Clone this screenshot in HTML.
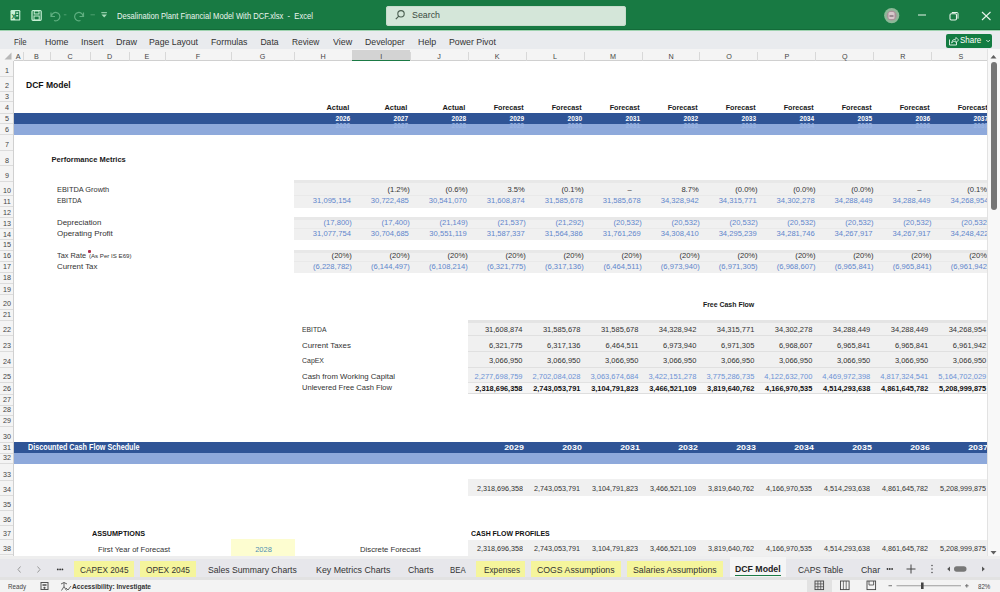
<!DOCTYPE html>
<html><head><meta charset="utf-8"><style>
html,body{margin:0;padding:0;width:1000px;height:592px;overflow:hidden;background:#fff;position:relative;font-family:"Liberation Sans",sans-serif}
body>div,body>span,body>svg{position:absolute}
div>span.t,body>span.t{position:absolute;white-space:pre}
</style></head><body>
<div style="left:0px;top:0px;width:1000px;height:30px;z-index:1;background:#187a43"></div>
<div style="left:0px;top:29px;width:1000px;height:1px;z-index:1;background:#136b39"></div>
<div style="left:386px;top:5.5px;width:239.5px;height:20px;z-index:1;background:#d4e6d9;border-radius:3px;box-shadow:inset 0 0 0 1px #c6dccc"></div>
<div style="left:0px;top:30px;width:1000px;height:19px;z-index:1;background:#e9ebee"></div>
<div style="left:0px;top:30px;width:1000px;height:1px;z-index:1;background:#9fd3b0"></div>
<div style="left:946px;top:33.6px;width:46.3px;height:14.7px;z-index:1;background:#137c42;border-radius:2px"></div>
<div style="left:0px;top:49px;width:987px;height:12px;z-index:1;background:#f4f4f4;border-bottom:1px solid #d0d0d0;box-sizing:border-box"></div>
<div style="left:22.5px;top:52px;width:1px;height:9px;z-index:2;background:#d8d8d8"></div>
<div style="left:49.5px;top:52px;width:1px;height:9px;z-index:2;background:#d8d8d8"></div>
<div style="left:89.5px;top:52px;width:1px;height:9px;z-index:2;background:#d8d8d8"></div>
<div style="left:128.5px;top:52px;width:1px;height:9px;z-index:2;background:#d8d8d8"></div>
<div style="left:164.5px;top:52px;width:1px;height:9px;z-index:2;background:#d8d8d8"></div>
<div style="left:230.5px;top:52px;width:1px;height:9px;z-index:2;background:#d8d8d8"></div>
<div style="left:293.7px;top:52px;width:1px;height:9px;z-index:2;background:#d8d8d8"></div>
<div style="left:351.67px;top:52px;width:1px;height:9px;z-index:2;background:#d8d8d8"></div>
<div style="left:409.64px;top:52px;width:1px;height:9px;z-index:2;background:#d8d8d8"></div>
<div style="left:467.61px;top:52px;width:1px;height:9px;z-index:2;background:#d8d8d8"></div>
<div style="left:525.58px;top:52px;width:1px;height:9px;z-index:2;background:#d8d8d8"></div>
<div style="left:583.55px;top:52px;width:1px;height:9px;z-index:2;background:#d8d8d8"></div>
<div style="left:641.52px;top:52px;width:1px;height:9px;z-index:2;background:#d8d8d8"></div>
<div style="left:699.49px;top:52px;width:1px;height:9px;z-index:2;background:#d8d8d8"></div>
<div style="left:757.46px;top:52px;width:1px;height:9px;z-index:2;background:#d8d8d8"></div>
<div style="left:815.43px;top:52px;width:1px;height:9px;z-index:2;background:#d8d8d8"></div>
<div style="left:873.4px;top:52px;width:1px;height:9px;z-index:2;background:#d8d8d8"></div>
<div style="left:931.37px;top:52px;width:1px;height:9px;z-index:2;background:#d8d8d8"></div>
<div style="left:989.34px;top:52px;width:1px;height:9px;z-index:2;background:#d8d8d8"></div>
<div style="left:352.17px;top:50px;width:57.97px;height:11px;z-index:2;background:#d3d3d3"></div>
<div style="left:352.17px;top:59.5px;width:57.97px;height:1.5px;z-index:3;background:#1b7a45"></div>
<div style="left:0px;top:49px;width:13.5px;height:12px;z-index:2;background:#f4f4f4"></div>
<div style="left:0px;top:61px;width:13.5px;height:496px;z-index:1;background:#f4f4f4;border-right:1px solid #d0d0d0;box-sizing:border-box"></div>
<div style="left:0px;top:75.5px;width:13px;height:1px;z-index:2;background:#dcdcdc"></div>
<div style="left:0px;top:90.5px;width:13px;height:1px;z-index:2;background:#dcdcdc"></div>
<div style="left:0px;top:101px;width:13px;height:1px;z-index:2;background:#dcdcdc"></div>
<div style="left:0px;top:112.5px;width:13px;height:1px;z-index:2;background:#dcdcdc"></div>
<div style="left:0px;top:123px;width:13px;height:1px;z-index:2;background:#dcdcdc"></div>
<div style="left:0px;top:134px;width:13px;height:1px;z-index:2;background:#dcdcdc"></div>
<div style="left:0px;top:149.5px;width:13px;height:1px;z-index:2;background:#dcdcdc"></div>
<div style="left:0px;top:165px;width:13px;height:1px;z-index:2;background:#dcdcdc"></div>
<div style="left:0px;top:180.5px;width:13px;height:1px;z-index:2;background:#dcdcdc"></div>
<div style="left:0px;top:195px;width:13px;height:1px;z-index:2;background:#dcdcdc"></div>
<div style="left:0px;top:206px;width:13px;height:1px;z-index:2;background:#dcdcdc"></div>
<div style="left:0px;top:217px;width:13px;height:1px;z-index:2;background:#dcdcdc"></div>
<div style="left:0px;top:228px;width:13px;height:1px;z-index:2;background:#dcdcdc"></div>
<div style="left:0px;top:239px;width:13px;height:1px;z-index:2;background:#dcdcdc"></div>
<div style="left:0px;top:249.5px;width:13px;height:1px;z-index:2;background:#dcdcdc"></div>
<div style="left:0px;top:260.5px;width:13px;height:1px;z-index:2;background:#dcdcdc"></div>
<div style="left:0px;top:271.5px;width:13px;height:1px;z-index:2;background:#dcdcdc"></div>
<div style="left:0px;top:282.5px;width:13px;height:1px;z-index:2;background:#dcdcdc"></div>
<div style="left:0px;top:294px;width:13px;height:1px;z-index:2;background:#dcdcdc"></div>
<div style="left:0px;top:309px;width:13px;height:1px;z-index:2;background:#dcdcdc"></div>
<div style="left:0px;top:320px;width:13px;height:1px;z-index:2;background:#dcdcdc"></div>
<div style="left:0px;top:335px;width:13px;height:1px;z-index:2;background:#dcdcdc"></div>
<div style="left:0px;top:351px;width:13px;height:1px;z-index:2;background:#dcdcdc"></div>
<div style="left:0px;top:366.5px;width:13px;height:1px;z-index:2;background:#dcdcdc"></div>
<div style="left:0px;top:382px;width:13px;height:1px;z-index:2;background:#dcdcdc"></div>
<div style="left:0px;top:393.5px;width:13px;height:1px;z-index:2;background:#dcdcdc"></div>
<div style="left:0px;top:404.5px;width:13px;height:1px;z-index:2;background:#dcdcdc"></div>
<div style="left:0px;top:415px;width:13px;height:1px;z-index:2;background:#dcdcdc"></div>
<div style="left:0px;top:426px;width:13px;height:1px;z-index:2;background:#dcdcdc"></div>
<div style="left:0px;top:441.5px;width:13px;height:1px;z-index:2;background:#dcdcdc"></div>
<div style="left:0px;top:452.5px;width:13px;height:1px;z-index:2;background:#dcdcdc"></div>
<div style="left:0px;top:463px;width:13px;height:1px;z-index:2;background:#dcdcdc"></div>
<div style="left:0px;top:480px;width:13px;height:1px;z-index:2;background:#dcdcdc"></div>
<div style="left:0px;top:495px;width:13px;height:1px;z-index:2;background:#dcdcdc"></div>
<div style="left:0px;top:509.5px;width:13px;height:1px;z-index:2;background:#dcdcdc"></div>
<div style="left:0px;top:524.5px;width:13px;height:1px;z-index:2;background:#dcdcdc"></div>
<div style="left:0px;top:539px;width:13px;height:1px;z-index:2;background:#dcdcdc"></div>
<div style="left:0px;top:554px;width:13px;height:1px;z-index:2;background:#dcdcdc"></div>
<div style="left:13.5px;top:61px;width:973.5px;height:496px;z-index:0;background:#fff"></div>
<div style="left:13.5px;top:113px;width:973.5px;height:10.5px;z-index:1;background:#2f5496"></div>
<div style="left:13.5px;top:123.5px;width:973.5px;height:11px;z-index:1;background:#8ea9db"></div>
<div style="left:13.5px;top:442px;width:973.5px;height:11px;z-index:1;background:#2f5496"></div>
<div style="left:13.5px;top:453px;width:973.5px;height:10.5px;z-index:1;background:#8ea9db"></div>
<div style="left:294.2px;top:180px;width:692.8px;height:28px;z-index:1;background:#f0f0f0"></div>
<div style="left:294.2px;top:180px;width:692.8px;height:3px;z-index:1;background:#e8e8e8"></div>
<div style="left:294.2px;top:195px;width:692.8px;height:1px;z-index:1;background:#e9e9e9"></div>
<div style="left:294.2px;top:217px;width:692.8px;height:23px;z-index:1;background:#f0f0f0"></div>
<div style="left:294.2px;top:217px;width:692.8px;height:3px;z-index:1;background:#e8e8e8"></div>
<div style="left:294.2px;top:228px;width:692.8px;height:1px;z-index:1;background:#e9e9e9"></div>
<div style="left:294.2px;top:250px;width:692.8px;height:22.5px;z-index:1;background:#f0f0f0"></div>
<div style="left:294.2px;top:250px;width:692.8px;height:3px;z-index:1;background:#e8e8e8"></div>
<div style="left:294.2px;top:260.5px;width:692.8px;height:1px;z-index:1;background:#e9e9e9"></div>
<div style="left:88px;top:250px;width:2.5px;height:2.5px;z-index:6;background:#b03050;border-radius:1px"></div>
<div style="left:468.11px;top:320px;width:518.89px;height:73px;z-index:1;background:#f0f0f0"></div>
<div style="left:468.11px;top:320px;width:518.89px;height:2.5px;z-index:1;background:#e4e4e4"></div>
<div style="left:468.11px;top:335px;width:518.89px;height:1px;z-index:1;background:#e0e0e0"></div>
<div style="left:468.11px;top:351px;width:518.89px;height:1px;z-index:1;background:#e0e0e0"></div>
<div style="left:468.11px;top:366.5px;width:518.89px;height:1px;z-index:1;background:#e0e0e0"></div>
<div style="left:468.11px;top:382px;width:518.89px;height:11px;z-index:1;background:#f6f6f6"></div>
<div style="left:468.11px;top:381.5px;width:518.89px;height:1px;z-index:1;background:#e2e2e2"></div>
<div style="left:468.11px;top:392.5px;width:518.89px;height:1px;z-index:1;background:#dedede"></div>
<div style="left:468.11px;top:479px;width:518.89px;height:16.5px;z-index:1;background:#f0f0f0"></div>
<div style="left:468.11px;top:539.5px;width:518.89px;height:17.5px;z-index:1;background:#f0f0f0"></div>
<div style="left:231.4px;top:539px;width:63.9px;height:18px;z-index:1;background:#fdfdd0"></div>
<div style="left:987px;top:49px;width:13px;height:507px;z-index:8;background:#f8f8f8;border-left:1px solid #e2e2e2;box-sizing:border-box"></div>
<div style="left:991px;top:62px;width:6px;height:148px;z-index:9;background:#767676;border-radius:3px"></div>
<div style="left:0px;top:556px;width:1000px;height:3px;z-index:8;background:#eeeeee"></div>
<div style="left:0px;top:559px;width:1000px;height:18px;z-index:8;background:#e7e7eb"></div>
<div style="left:0px;top:577px;width:1000px;height:2.5px;z-index:8;background:#e2e2e2"></div>
<div style="left:0px;top:579.5px;width:1000px;height:12.5px;z-index:8;background:#f3f3f3"></div>
<div style="left:74px;top:561px;width:59.6px;height:15.5px;z-index:9;background:#f5f59c"></div>
<div style="left:140px;top:561px;width:56px;height:15.5px;z-index:9;background:#f5f59c"></div>
<div style="left:475.7px;top:561px;width:49.3px;height:15.5px;z-index:9;background:#f5f59c"></div>
<div style="left:531px;top:561px;width:89.8px;height:15.5px;z-index:9;background:#f5f59c"></div>
<div style="left:627.3px;top:561px;width:96.2px;height:15.5px;z-index:9;background:#f5f59c"></div>
<div style="left:729.8px;top:557px;width:56px;height:20px;z-index:9;background:#f5f5f5"></div>
<div style="left:735.4px;top:574.5px;width:45.6px;height:1.1px;z-index:10;background:#1b7a45"></div>
<span class="t" style="left:117.3px;top:11.88px;font-size:9px;line-height:9px;color:#eaf5ee;z-index:5;transform:scaleX(0.846);transform-origin:left 0;">Desalination Plant Financial Model With DCF.xlsx  -  Excel</span>
<span class="t" style="left:412px;top:11.18px;font-size:9px;line-height:9px;color:#3a4a40;z-index:5;transform:scaleX(0.982);transform-origin:left 0;">Search</span>
<span class="t" style="left:13.75px;top:37.52px;font-size:8.6px;line-height:8.6px;color:#333;z-index:5;transform:scaleX(0.903);transform-origin:left 0;">File</span>
<span class="t" style="left:44.5px;top:37.52px;font-size:8.6px;line-height:8.6px;color:#333;z-index:5;transform:scaleX(1.025);transform-origin:left 0;">Home</span>
<span class="t" style="left:80.5px;top:37.52px;font-size:8.6px;line-height:8.6px;color:#333;z-index:5;transform:scaleX(1.047);transform-origin:left 0;">Insert</span>
<span class="t" style="left:116px;top:37.52px;font-size:8.6px;line-height:8.6px;color:#333;z-index:5;transform:scaleX(1.047);transform-origin:left 0;">Draw</span>
<span class="t" style="left:149px;top:37.52px;font-size:8.6px;line-height:8.6px;color:#333;z-index:5;transform:scaleX(1.015);transform-origin:left 0;">Page Layout</span>
<span class="t" style="left:211px;top:37.52px;font-size:8.6px;line-height:8.6px;color:#333;z-index:5;transform:scaleX(1.019);transform-origin:left 0;">Formulas</span>
<span class="t" style="left:260.4px;top:37.52px;font-size:8.6px;line-height:8.6px;color:#333;z-index:5;">Data</span>
<span class="t" style="left:292.3px;top:37.52px;font-size:8.6px;line-height:8.6px;color:#333;z-index:5;transform:scaleX(0.969);transform-origin:left 0;">Review</span>
<span class="t" style="left:332.6px;top:37.52px;font-size:8.6px;line-height:8.6px;color:#333;z-index:5;transform:scaleX(1.039);transform-origin:left 0;">View</span>
<span class="t" style="left:364.8px;top:37.52px;font-size:8.6px;line-height:8.6px;color:#333;z-index:5;transform:scaleX(1.013);transform-origin:left 0;">Developer</span>
<span class="t" style="left:417.5px;top:37.52px;font-size:8.6px;line-height:8.6px;color:#333;z-index:5;transform:scaleX(1.030);transform-origin:left 0;">Help</span>
<span class="t" style="left:448.7px;top:37.52px;font-size:8.6px;line-height:8.6px;color:#333;z-index:5;transform:scaleX(1.021);transform-origin:left 0;">Power Pivot</span>
<span class="t" style="left:959.7px;top:37.26px;font-size:8.2px;line-height:8.2px;color:#fff;z-index:5;transform:scaleX(0.975);transform-origin:left 0;">Share</span>
<span class="t" style="left:15.85px;top:52.51px;font-size:7.2px;line-height:7.2px;color:#444;z-index:5;">A</span>
<span class="t" style="left:34.1px;top:52.51px;font-size:7.2px;line-height:7.2px;color:#444;z-index:5;">B</span>
<span class="t" style="left:67.4px;top:52.51px;font-size:7.2px;line-height:7.2px;color:#444;z-index:5;">C</span>
<span class="t" style="left:106.9px;top:52.51px;font-size:7.2px;line-height:7.2px;color:#444;z-index:5;">D</span>
<span class="t" style="left:144.6px;top:52.51px;font-size:7.2px;line-height:7.2px;color:#444;z-index:5;">E</span>
<span class="t" style="left:195.8px;top:52.51px;font-size:7.2px;line-height:7.2px;color:#444;z-index:5;">F</span>
<span class="t" style="left:259.8px;top:52.51px;font-size:7.2px;line-height:7.2px;color:#444;z-index:5;">G</span>
<span class="t" style="left:320.59px;top:52.51px;font-size:7.2px;line-height:7.2px;color:#444;z-index:5;">H</span>
<span class="t" style="left:380.16px;top:52.51px;font-size:7.2px;line-height:7.2px;color:#444;z-index:5;">I</span>
<span class="t" style="left:437.33px;top:52.51px;font-size:7.2px;line-height:7.2px;color:#444;z-index:5;">J</span>
<span class="t" style="left:494.7px;top:52.51px;font-size:7.2px;line-height:7.2px;color:#444;z-index:5;">K</span>
<span class="t" style="left:553.07px;top:52.51px;font-size:7.2px;line-height:7.2px;color:#444;z-index:5;">L</span>
<span class="t" style="left:610.04px;top:52.51px;font-size:7.2px;line-height:7.2px;color:#444;z-index:5;">M</span>
<span class="t" style="left:668.41px;top:52.51px;font-size:7.2px;line-height:7.2px;color:#444;z-index:5;">N</span>
<span class="t" style="left:726.18px;top:52.51px;font-size:7.2px;line-height:7.2px;color:#444;z-index:5;">O</span>
<span class="t" style="left:784.55px;top:52.51px;font-size:7.2px;line-height:7.2px;color:#444;z-index:5;">P</span>
<span class="t" style="left:842.12px;top:52.51px;font-size:7.2px;line-height:7.2px;color:#444;z-index:5;">Q</span>
<span class="t" style="left:900.29px;top:52.51px;font-size:7.2px;line-height:7.2px;color:#444;z-index:5;">R</span>
<span class="t" style="left:958.46px;top:52.51px;font-size:7.2px;line-height:7.2px;color:#444;z-index:5;">S</span>
<span class="t" style="left:5px;top:67.31px;font-size:7.2px;line-height:7.2px;color:#444;z-index:5;">1</span>
<span class="t" style="left:5px;top:82.31px;font-size:7.2px;line-height:7.2px;color:#444;z-index:5;">2</span>
<span class="t" style="left:5px;top:92.81px;font-size:7.2px;line-height:7.2px;color:#444;z-index:5;">3</span>
<span class="t" style="left:5px;top:104.31px;font-size:7.2px;line-height:7.2px;color:#444;z-index:5;">4</span>
<span class="t" style="left:5px;top:114.81px;font-size:7.2px;line-height:7.2px;color:#444;z-index:5;">5</span>
<span class="t" style="left:5px;top:125.81px;font-size:7.2px;line-height:7.2px;color:#444;z-index:5;">6</span>
<span class="t" style="left:5px;top:141.31px;font-size:7.2px;line-height:7.2px;color:#444;z-index:5;">7</span>
<span class="t" style="left:5px;top:156.81px;font-size:7.2px;line-height:7.2px;color:#444;z-index:5;">8</span>
<span class="t" style="left:5px;top:172.31px;font-size:7.2px;line-height:7.2px;color:#444;z-index:5;">9</span>
<span class="t" style="left:3px;top:186.81px;font-size:7.2px;line-height:7.2px;color:#444;z-index:5;">10</span>
<span class="t" style="left:3.27px;top:197.81px;font-size:7.2px;line-height:7.2px;color:#444;z-index:5;">11</span>
<span class="t" style="left:3px;top:208.81px;font-size:7.2px;line-height:7.2px;color:#444;z-index:5;">12</span>
<span class="t" style="left:3px;top:219.81px;font-size:7.2px;line-height:7.2px;color:#444;z-index:5;">13</span>
<span class="t" style="left:3px;top:230.81px;font-size:7.2px;line-height:7.2px;color:#444;z-index:5;">14</span>
<span class="t" style="left:3px;top:241.31px;font-size:7.2px;line-height:7.2px;color:#444;z-index:5;">15</span>
<span class="t" style="left:3px;top:252.31px;font-size:7.2px;line-height:7.2px;color:#444;z-index:5;">16</span>
<span class="t" style="left:3px;top:263.31px;font-size:7.2px;line-height:7.2px;color:#444;z-index:5;">17</span>
<span class="t" style="left:3px;top:274.31px;font-size:7.2px;line-height:7.2px;color:#444;z-index:5;">18</span>
<span class="t" style="left:3px;top:285.81px;font-size:7.2px;line-height:7.2px;color:#444;z-index:5;">19</span>
<span class="t" style="left:3px;top:300.11px;font-size:7.2px;line-height:7.2px;color:#444;z-index:5;">20</span>
<span class="t" style="left:3px;top:311.11px;font-size:7.2px;line-height:7.2px;color:#444;z-index:5;">21</span>
<span class="t" style="left:3px;top:326.11px;font-size:7.2px;line-height:7.2px;color:#444;z-index:5;">22</span>
<span class="t" style="left:3px;top:342.11px;font-size:7.2px;line-height:7.2px;color:#444;z-index:5;">23</span>
<span class="t" style="left:3px;top:357.61px;font-size:7.2px;line-height:7.2px;color:#444;z-index:5;">24</span>
<span class="t" style="left:3px;top:373.11px;font-size:7.2px;line-height:7.2px;color:#444;z-index:5;">25</span>
<span class="t" style="left:3px;top:384.61px;font-size:7.2px;line-height:7.2px;color:#444;z-index:5;">26</span>
<span class="t" style="left:3px;top:395.61px;font-size:7.2px;line-height:7.2px;color:#444;z-index:5;">27</span>
<span class="t" style="left:3px;top:406.11px;font-size:7.2px;line-height:7.2px;color:#444;z-index:5;">28</span>
<span class="t" style="left:3px;top:417.11px;font-size:7.2px;line-height:7.2px;color:#444;z-index:5;">29</span>
<span class="t" style="left:3px;top:432.61px;font-size:7.2px;line-height:7.2px;color:#444;z-index:5;">30</span>
<span class="t" style="left:3px;top:443.61px;font-size:7.2px;line-height:7.2px;color:#444;z-index:5;">31</span>
<span class="t" style="left:3px;top:454.11px;font-size:7.2px;line-height:7.2px;color:#444;z-index:5;">32</span>
<span class="t" style="left:3px;top:471.11px;font-size:7.2px;line-height:7.2px;color:#444;z-index:5;">33</span>
<span class="t" style="left:3px;top:486.11px;font-size:7.2px;line-height:7.2px;color:#444;z-index:5;">34</span>
<span class="t" style="left:3px;top:500.61px;font-size:7.2px;line-height:7.2px;color:#444;z-index:5;">35</span>
<span class="t" style="left:3px;top:515.61px;font-size:7.2px;line-height:7.2px;color:#444;z-index:5;">36</span>
<span class="t" style="left:3px;top:530.11px;font-size:7.2px;line-height:7.2px;color:#444;z-index:5;">37</span>
<span class="t" style="left:3px;top:545.11px;font-size:7.2px;line-height:7.2px;color:#444;z-index:5;">38</span>
<span class="t" style="left:26.4px;top:79.84px;font-size:9.4px;line-height:9.4px;color:#111;z-index:5;font-weight:700;transform:scaleX(0.911);transform-origin:left 0;">DCF Model</span>
<div style="left:0;top:0;width:988px;height:592px;overflow:hidden;z-index:5;pointer-events:none"><span class="t" style="left:326.36px;top:104.37px;font-size:7.6px;line-height:7.6px;color:#1a1a1a;z-index:5;font-weight:700;transform:scaleX(0.978);transform-origin:right 0;">Actual</span></div>
<div style="left:0;top:0;width:988px;height:592px;overflow:hidden;z-index:5;pointer-events:none"><span class="t" style="left:336.36px;top:116.07px;font-size:6.3px;line-height:6.3px;color:#fff;z-index:5;font-weight:700;transform:scaleX(1.035);transform-origin:right 0;">2026</span></div>
<div style="left:0;top:0;width:988px;height:592px;overflow:hidden;z-index:5;pointer-events:none"><span class="t" style="left:336.36px;top:122.67px;font-size:6.3px;line-height:6.3px;color:#9ab4e2;z-index:5;font-weight:700;transform:scaleX(1.035);transform-origin:right 0;">2026</span></div>
<div style="left:0;top:0;width:988px;height:592px;overflow:hidden;z-index:5;pointer-events:none"><span class="t" style="left:384.33px;top:104.37px;font-size:7.6px;line-height:7.6px;color:#1a1a1a;z-index:5;font-weight:700;transform:scaleX(0.978);transform-origin:right 0;">Actual</span></div>
<div style="left:0;top:0;width:988px;height:592px;overflow:hidden;z-index:5;pointer-events:none"><span class="t" style="left:394.33px;top:116.07px;font-size:6.3px;line-height:6.3px;color:#fff;z-index:5;font-weight:700;transform:scaleX(1.035);transform-origin:right 0;">2027</span></div>
<div style="left:0;top:0;width:988px;height:592px;overflow:hidden;z-index:5;pointer-events:none"><span class="t" style="left:394.33px;top:122.67px;font-size:6.3px;line-height:6.3px;color:#9ab4e2;z-index:5;font-weight:700;transform:scaleX(1.035);transform-origin:right 0;">2027</span></div>
<div style="left:0;top:0;width:988px;height:592px;overflow:hidden;z-index:5;pointer-events:none"><span class="t" style="left:442.3px;top:104.37px;font-size:7.6px;line-height:7.6px;color:#1a1a1a;z-index:5;font-weight:700;transform:scaleX(0.978);transform-origin:right 0;">Actual</span></div>
<div style="left:0;top:0;width:988px;height:592px;overflow:hidden;z-index:5;pointer-events:none"><span class="t" style="left:452.3px;top:116.07px;font-size:6.3px;line-height:6.3px;color:#fff;z-index:5;font-weight:700;transform:scaleX(1.035);transform-origin:right 0;">2028</span></div>
<div style="left:0;top:0;width:988px;height:592px;overflow:hidden;z-index:5;pointer-events:none"><span class="t" style="left:452.3px;top:122.67px;font-size:6.3px;line-height:6.3px;color:#9ab4e2;z-index:5;font-weight:700;transform:scaleX(1.035);transform-origin:right 0;">2028</span></div>
<div style="left:0;top:0;width:988px;height:592px;overflow:hidden;z-index:5;pointer-events:none"><span class="t" style="left:491.83px;top:104.37px;font-size:7.6px;line-height:7.6px;color:#1a1a1a;z-index:5;font-weight:700;transform:scaleX(0.948);transform-origin:right 0;">Forecast</span></div>
<div style="left:0;top:0;width:988px;height:592px;overflow:hidden;z-index:5;pointer-events:none"><span class="t" style="left:510.27px;top:116.07px;font-size:6.3px;line-height:6.3px;color:#fff;z-index:5;font-weight:700;transform:scaleX(1.035);transform-origin:right 0;">2029</span></div>
<div style="left:0;top:0;width:988px;height:592px;overflow:hidden;z-index:5;pointer-events:none"><span class="t" style="left:510.27px;top:122.67px;font-size:6.3px;line-height:6.3px;color:#9ab4e2;z-index:5;font-weight:700;transform:scaleX(1.035);transform-origin:right 0;">2029</span></div>
<div style="left:0;top:0;width:988px;height:592px;overflow:hidden;z-index:5;pointer-events:none"><span class="t" style="left:549.8px;top:104.37px;font-size:7.6px;line-height:7.6px;color:#1a1a1a;z-index:5;font-weight:700;transform:scaleX(0.948);transform-origin:right 0;">Forecast</span></div>
<div style="left:0;top:0;width:988px;height:592px;overflow:hidden;z-index:5;pointer-events:none"><span class="t" style="left:568.24px;top:116.07px;font-size:6.3px;line-height:6.3px;color:#fff;z-index:5;font-weight:700;transform:scaleX(1.035);transform-origin:right 0;">2030</span></div>
<div style="left:0;top:0;width:988px;height:592px;overflow:hidden;z-index:5;pointer-events:none"><span class="t" style="left:568.24px;top:122.67px;font-size:6.3px;line-height:6.3px;color:#9ab4e2;z-index:5;font-weight:700;transform:scaleX(1.035);transform-origin:right 0;">2030</span></div>
<div style="left:0;top:0;width:988px;height:592px;overflow:hidden;z-index:5;pointer-events:none"><span class="t" style="left:607.77px;top:104.37px;font-size:7.6px;line-height:7.6px;color:#1a1a1a;z-index:5;font-weight:700;transform:scaleX(0.948);transform-origin:right 0;">Forecast</span></div>
<div style="left:0;top:0;width:988px;height:592px;overflow:hidden;z-index:5;pointer-events:none"><span class="t" style="left:626.21px;top:116.07px;font-size:6.3px;line-height:6.3px;color:#fff;z-index:5;font-weight:700;transform:scaleX(1.035);transform-origin:right 0;">2031</span></div>
<div style="left:0;top:0;width:988px;height:592px;overflow:hidden;z-index:5;pointer-events:none"><span class="t" style="left:626.21px;top:122.67px;font-size:6.3px;line-height:6.3px;color:#9ab4e2;z-index:5;font-weight:700;transform:scaleX(1.035);transform-origin:right 0;">2031</span></div>
<div style="left:0;top:0;width:988px;height:592px;overflow:hidden;z-index:5;pointer-events:none"><span class="t" style="left:665.74px;top:104.37px;font-size:7.6px;line-height:7.6px;color:#1a1a1a;z-index:5;font-weight:700;transform:scaleX(0.948);transform-origin:right 0;">Forecast</span></div>
<div style="left:0;top:0;width:988px;height:592px;overflow:hidden;z-index:5;pointer-events:none"><span class="t" style="left:684.18px;top:116.07px;font-size:6.3px;line-height:6.3px;color:#fff;z-index:5;font-weight:700;transform:scaleX(1.035);transform-origin:right 0;">2032</span></div>
<div style="left:0;top:0;width:988px;height:592px;overflow:hidden;z-index:5;pointer-events:none"><span class="t" style="left:684.18px;top:122.67px;font-size:6.3px;line-height:6.3px;color:#9ab4e2;z-index:5;font-weight:700;transform:scaleX(1.035);transform-origin:right 0;">2032</span></div>
<div style="left:0;top:0;width:988px;height:592px;overflow:hidden;z-index:5;pointer-events:none"><span class="t" style="left:723.71px;top:104.37px;font-size:7.6px;line-height:7.6px;color:#1a1a1a;z-index:5;font-weight:700;transform:scaleX(0.948);transform-origin:right 0;">Forecast</span></div>
<div style="left:0;top:0;width:988px;height:592px;overflow:hidden;z-index:5;pointer-events:none"><span class="t" style="left:742.15px;top:116.07px;font-size:6.3px;line-height:6.3px;color:#fff;z-index:5;font-weight:700;transform:scaleX(1.035);transform-origin:right 0;">2033</span></div>
<div style="left:0;top:0;width:988px;height:592px;overflow:hidden;z-index:5;pointer-events:none"><span class="t" style="left:742.15px;top:122.67px;font-size:6.3px;line-height:6.3px;color:#9ab4e2;z-index:5;font-weight:700;transform:scaleX(1.035);transform-origin:right 0;">2033</span></div>
<div style="left:0;top:0;width:988px;height:592px;overflow:hidden;z-index:5;pointer-events:none"><span class="t" style="left:781.68px;top:104.37px;font-size:7.6px;line-height:7.6px;color:#1a1a1a;z-index:5;font-weight:700;transform:scaleX(0.948);transform-origin:right 0;">Forecast</span></div>
<div style="left:0;top:0;width:988px;height:592px;overflow:hidden;z-index:5;pointer-events:none"><span class="t" style="left:800.12px;top:116.07px;font-size:6.3px;line-height:6.3px;color:#fff;z-index:5;font-weight:700;transform:scaleX(1.035);transform-origin:right 0;">2034</span></div>
<div style="left:0;top:0;width:988px;height:592px;overflow:hidden;z-index:5;pointer-events:none"><span class="t" style="left:800.12px;top:122.67px;font-size:6.3px;line-height:6.3px;color:#9ab4e2;z-index:5;font-weight:700;transform:scaleX(1.035);transform-origin:right 0;">2034</span></div>
<div style="left:0;top:0;width:988px;height:592px;overflow:hidden;z-index:5;pointer-events:none"><span class="t" style="left:839.65px;top:104.37px;font-size:7.6px;line-height:7.6px;color:#1a1a1a;z-index:5;font-weight:700;transform:scaleX(0.948);transform-origin:right 0;">Forecast</span></div>
<div style="left:0;top:0;width:988px;height:592px;overflow:hidden;z-index:5;pointer-events:none"><span class="t" style="left:858.09px;top:116.07px;font-size:6.3px;line-height:6.3px;color:#fff;z-index:5;font-weight:700;transform:scaleX(1.035);transform-origin:right 0;">2035</span></div>
<div style="left:0;top:0;width:988px;height:592px;overflow:hidden;z-index:5;pointer-events:none"><span class="t" style="left:858.09px;top:122.67px;font-size:6.3px;line-height:6.3px;color:#9ab4e2;z-index:5;font-weight:700;transform:scaleX(1.035);transform-origin:right 0;">2035</span></div>
<div style="left:0;top:0;width:988px;height:592px;overflow:hidden;z-index:5;pointer-events:none"><span class="t" style="left:897.62px;top:104.37px;font-size:7.6px;line-height:7.6px;color:#1a1a1a;z-index:5;font-weight:700;transform:scaleX(0.948);transform-origin:right 0;">Forecast</span></div>
<div style="left:0;top:0;width:988px;height:592px;overflow:hidden;z-index:5;pointer-events:none"><span class="t" style="left:916.06px;top:116.07px;font-size:6.3px;line-height:6.3px;color:#fff;z-index:5;font-weight:700;transform:scaleX(1.035);transform-origin:right 0;">2036</span></div>
<div style="left:0;top:0;width:988px;height:592px;overflow:hidden;z-index:5;pointer-events:none"><span class="t" style="left:916.06px;top:122.67px;font-size:6.3px;line-height:6.3px;color:#9ab4e2;z-index:5;font-weight:700;transform:scaleX(1.035);transform-origin:right 0;">2036</span></div>
<div style="left:0;top:0;width:988px;height:592px;overflow:hidden;z-index:5;pointer-events:none"><span class="t" style="left:955.59px;top:104.37px;font-size:7.6px;line-height:7.6px;color:#1a1a1a;z-index:5;font-weight:700;transform:scaleX(0.948);transform-origin:right 0;">Forecast</span></div>
<div style="left:0;top:0;width:988px;height:592px;overflow:hidden;z-index:5;pointer-events:none"><span class="t" style="left:974.03px;top:116.07px;font-size:6.3px;line-height:6.3px;color:#fff;z-index:5;font-weight:700;transform:scaleX(1.035);transform-origin:right 0;">2037</span></div>
<div style="left:0;top:0;width:988px;height:592px;overflow:hidden;z-index:5;pointer-events:none"><span class="t" style="left:974.03px;top:122.67px;font-size:6.3px;line-height:6.3px;color:#9ab4e2;z-index:5;font-weight:700;transform:scaleX(1.035);transform-origin:right 0;">2037</span></div>
<span class="t" style="left:51.6px;top:156.45px;font-size:7.5px;line-height:7.5px;color:#1a1a1a;z-index:5;font-weight:700;">Performance Metrics</span>
<span class="t" style="left:57px;top:186.25px;font-size:7.5px;line-height:7.5px;color:#333333;z-index:5;transform:scaleX(0.986);transform-origin:left 0;">EBITDA Growth</span>
<span class="t" style="left:57px;top:197.05px;font-size:7.5px;line-height:7.5px;color:#333333;z-index:5;transform:scaleX(0.908);transform-origin:left 0;">EBITDA</span>
<span class="t" style="left:57px;top:219.25px;font-size:7.5px;line-height:7.5px;color:#333333;z-index:5;transform:scaleX(1.054);transform-origin:left 0;">Depreciation</span>
<span class="t" style="left:57px;top:230.05px;font-size:7.5px;line-height:7.5px;color:#333333;z-index:5;transform:scaleX(1.062);transform-origin:left 0;">Operating Profit</span>
<span class="t" style="left:57px;top:262.65px;font-size:7.5px;line-height:7.5px;color:#333333;z-index:5;transform:scaleX(1.045);transform-origin:left 0;">Current Tax</span>
<span class="t" style="left:57px;top:252.15px;font-size:7.5px;line-height:7.5px;color:#333333;z-index:5;transform:scaleX(0.980);transform-origin:left 0;">Tax Rate</span>
<span class="t" style="left:88.5px;top:253.59px;font-size:5.8px;line-height:5.8px;color:#333333;z-index:5;transform:scaleX(1.055);transform-origin:left 0;">(As Per IS E69)</span>
<div style="left:0;top:0;width:988px;height:592px;overflow:hidden;z-index:5;pointer-events:none"><span class="t" style="left:351.87px;top:186.17px;font-size:7.6px;line-height:7.6px;color:#333333;z-index:5;"></span></div>
<div style="left:0;top:0;width:988px;height:592px;overflow:hidden;z-index:5;pointer-events:none"><span class="t" style="left:312.86px;top:196.97px;font-size:7.6px;line-height:7.6px;color:#5f86cc;z-index:5;">31,095,154</span></div>
<div style="left:0;top:0;width:988px;height:592px;overflow:hidden;z-index:5;pointer-events:none"><span class="t" style="left:323.59px;top:219.17px;font-size:7.6px;line-height:7.6px;color:#5f86cc;z-index:5;">(17,800)</span></div>
<div style="left:0;top:0;width:988px;height:592px;overflow:hidden;z-index:5;pointer-events:none"><span class="t" style="left:312.86px;top:229.97px;font-size:7.6px;line-height:7.6px;color:#5f86cc;z-index:5;">31,077,754</span></div>
<div style="left:0;top:0;width:988px;height:592px;overflow:hidden;z-index:5;pointer-events:none"><span class="t" style="left:331.61px;top:252.07px;font-size:7.6px;line-height:7.6px;color:#333333;z-index:5;">(20%)</span></div>
<div style="left:0;top:0;width:988px;height:592px;overflow:hidden;z-index:5;pointer-events:none"><span class="t" style="left:313.03px;top:262.57px;font-size:7.6px;line-height:7.6px;color:#5f86cc;z-index:5;">(6,228,782)</span></div>
<div style="left:0;top:0;width:988px;height:592px;overflow:hidden;z-index:5;pointer-events:none"><span class="t" style="left:387.47px;top:186.17px;font-size:7.6px;line-height:7.6px;color:#333333;z-index:5;">(1.2%)</span></div>
<div style="left:0;top:0;width:988px;height:592px;overflow:hidden;z-index:5;pointer-events:none"><span class="t" style="left:370.83px;top:196.97px;font-size:7.6px;line-height:7.6px;color:#5f86cc;z-index:5;">30,722,485</span></div>
<div style="left:0;top:0;width:988px;height:592px;overflow:hidden;z-index:5;pointer-events:none"><span class="t" style="left:381.56px;top:219.17px;font-size:7.6px;line-height:7.6px;color:#5f86cc;z-index:5;">(17,400)</span></div>
<div style="left:0;top:0;width:988px;height:592px;overflow:hidden;z-index:5;pointer-events:none"><span class="t" style="left:370.83px;top:229.97px;font-size:7.6px;line-height:7.6px;color:#5f86cc;z-index:5;">30,704,685</span></div>
<div style="left:0;top:0;width:988px;height:592px;overflow:hidden;z-index:5;pointer-events:none"><span class="t" style="left:389.58px;top:252.07px;font-size:7.6px;line-height:7.6px;color:#333333;z-index:5;">(20%)</span></div>
<div style="left:0;top:0;width:988px;height:592px;overflow:hidden;z-index:5;pointer-events:none"><span class="t" style="left:371px;top:262.57px;font-size:7.6px;line-height:7.6px;color:#5f86cc;z-index:5;">(6,144,497)</span></div>
<div style="left:0;top:0;width:988px;height:592px;overflow:hidden;z-index:5;pointer-events:none"><span class="t" style="left:445.44px;top:186.17px;font-size:7.6px;line-height:7.6px;color:#333333;z-index:5;">(0.6%)</span></div>
<div style="left:0;top:0;width:988px;height:592px;overflow:hidden;z-index:5;pointer-events:none"><span class="t" style="left:428.8px;top:196.97px;font-size:7.6px;line-height:7.6px;color:#5f86cc;z-index:5;">30,541,070</span></div>
<div style="left:0;top:0;width:988px;height:592px;overflow:hidden;z-index:5;pointer-events:none"><span class="t" style="left:439.53px;top:219.17px;font-size:7.6px;line-height:7.6px;color:#5f86cc;z-index:5;">(21,149)</span></div>
<div style="left:0;top:0;width:988px;height:592px;overflow:hidden;z-index:5;pointer-events:none"><span class="t" style="left:429.37px;top:229.97px;font-size:7.6px;line-height:7.6px;color:#5f86cc;z-index:5;">30,551,119</span></div>
<div style="left:0;top:0;width:988px;height:592px;overflow:hidden;z-index:5;pointer-events:none"><span class="t" style="left:447.55px;top:252.07px;font-size:7.6px;line-height:7.6px;color:#333333;z-index:5;">(20%)</span></div>
<div style="left:0;top:0;width:988px;height:592px;overflow:hidden;z-index:5;pointer-events:none"><span class="t" style="left:428.97px;top:262.57px;font-size:7.6px;line-height:7.6px;color:#5f86cc;z-index:5;">(6,108,214)</span></div>
<div style="left:0;top:0;width:988px;height:592px;overflow:hidden;z-index:5;pointer-events:none"><span class="t" style="left:507.47px;top:186.17px;font-size:7.6px;line-height:7.6px;color:#333333;z-index:5;">3.5%</span></div>
<div style="left:0;top:0;width:988px;height:592px;overflow:hidden;z-index:5;pointer-events:none"><span class="t" style="left:486.77px;top:196.97px;font-size:7.6px;line-height:7.6px;color:#5f86cc;z-index:5;">31,608,874</span></div>
<div style="left:0;top:0;width:988px;height:592px;overflow:hidden;z-index:5;pointer-events:none"><span class="t" style="left:497.5px;top:219.17px;font-size:7.6px;line-height:7.6px;color:#5f86cc;z-index:5;">(21,537)</span></div>
<div style="left:0;top:0;width:988px;height:592px;overflow:hidden;z-index:5;pointer-events:none"><span class="t" style="left:486.77px;top:229.97px;font-size:7.6px;line-height:7.6px;color:#5f86cc;z-index:5;">31,587,337</span></div>
<div style="left:0;top:0;width:988px;height:592px;overflow:hidden;z-index:5;pointer-events:none"><span class="t" style="left:505.52px;top:252.07px;font-size:7.6px;line-height:7.6px;color:#333333;z-index:5;">(20%)</span></div>
<div style="left:0;top:0;width:988px;height:592px;overflow:hidden;z-index:5;pointer-events:none"><span class="t" style="left:486.94px;top:262.57px;font-size:7.6px;line-height:7.6px;color:#5f86cc;z-index:5;">(6,321,775)</span></div>
<div style="left:0;top:0;width:988px;height:592px;overflow:hidden;z-index:5;pointer-events:none"><span class="t" style="left:561.38px;top:186.17px;font-size:7.6px;line-height:7.6px;color:#333333;z-index:5;">(0.1%)</span></div>
<div style="left:0;top:0;width:988px;height:592px;overflow:hidden;z-index:5;pointer-events:none"><span class="t" style="left:544.74px;top:196.97px;font-size:7.6px;line-height:7.6px;color:#5f86cc;z-index:5;">31,585,678</span></div>
<div style="left:0;top:0;width:988px;height:592px;overflow:hidden;z-index:5;pointer-events:none"><span class="t" style="left:555.47px;top:219.17px;font-size:7.6px;line-height:7.6px;color:#5f86cc;z-index:5;">(21,292)</span></div>
<div style="left:0;top:0;width:988px;height:592px;overflow:hidden;z-index:5;pointer-events:none"><span class="t" style="left:544.74px;top:229.97px;font-size:7.6px;line-height:7.6px;color:#5f86cc;z-index:5;">31,564,386</span></div>
<div style="left:0;top:0;width:988px;height:592px;overflow:hidden;z-index:5;pointer-events:none"><span class="t" style="left:563.49px;top:252.07px;font-size:7.6px;line-height:7.6px;color:#333333;z-index:5;">(20%)</span></div>
<div style="left:0;top:0;width:988px;height:592px;overflow:hidden;z-index:5;pointer-events:none"><span class="t" style="left:544.91px;top:262.57px;font-size:7.6px;line-height:7.6px;color:#5f86cc;z-index:5;">(6,317,136)</span></div>
<div style="left:0;top:0;width:988px;height:592px;overflow:hidden;z-index:5;pointer-events:none"><span class="t" style="left:627.5px;top:186.17px;font-size:7.6px;line-height:7.6px;color:#333333;z-index:5;">–</span></div>
<div style="left:0;top:0;width:988px;height:592px;overflow:hidden;z-index:5;pointer-events:none"><span class="t" style="left:602.71px;top:196.97px;font-size:7.6px;line-height:7.6px;color:#5f86cc;z-index:5;">31,585,678</span></div>
<div style="left:0;top:0;width:988px;height:592px;overflow:hidden;z-index:5;pointer-events:none"><span class="t" style="left:613.44px;top:219.17px;font-size:7.6px;line-height:7.6px;color:#5f86cc;z-index:5;">(20,532)</span></div>
<div style="left:0;top:0;width:988px;height:592px;overflow:hidden;z-index:5;pointer-events:none"><span class="t" style="left:602.71px;top:229.97px;font-size:7.6px;line-height:7.6px;color:#5f86cc;z-index:5;">31,761,269</span></div>
<div style="left:0;top:0;width:988px;height:592px;overflow:hidden;z-index:5;pointer-events:none"><span class="t" style="left:621.46px;top:252.07px;font-size:7.6px;line-height:7.6px;color:#333333;z-index:5;">(20%)</span></div>
<div style="left:0;top:0;width:988px;height:592px;overflow:hidden;z-index:5;pointer-events:none"><span class="t" style="left:603.44px;top:262.57px;font-size:7.6px;line-height:7.6px;color:#5f86cc;z-index:5;">(6,464,511)</span></div>
<div style="left:0;top:0;width:988px;height:592px;overflow:hidden;z-index:5;pointer-events:none"><span class="t" style="left:681.38px;top:186.17px;font-size:7.6px;line-height:7.6px;color:#333333;z-index:5;">8.7%</span></div>
<div style="left:0;top:0;width:988px;height:592px;overflow:hidden;z-index:5;pointer-events:none"><span class="t" style="left:660.68px;top:196.97px;font-size:7.6px;line-height:7.6px;color:#5f86cc;z-index:5;">34,328,942</span></div>
<div style="left:0;top:0;width:988px;height:592px;overflow:hidden;z-index:5;pointer-events:none"><span class="t" style="left:671.41px;top:219.17px;font-size:7.6px;line-height:7.6px;color:#5f86cc;z-index:5;">(20,532)</span></div>
<div style="left:0;top:0;width:988px;height:592px;overflow:hidden;z-index:5;pointer-events:none"><span class="t" style="left:660.68px;top:229.97px;font-size:7.6px;line-height:7.6px;color:#5f86cc;z-index:5;">34,308,410</span></div>
<div style="left:0;top:0;width:988px;height:592px;overflow:hidden;z-index:5;pointer-events:none"><span class="t" style="left:679.43px;top:252.07px;font-size:7.6px;line-height:7.6px;color:#333333;z-index:5;">(20%)</span></div>
<div style="left:0;top:0;width:988px;height:592px;overflow:hidden;z-index:5;pointer-events:none"><span class="t" style="left:660.85px;top:262.57px;font-size:7.6px;line-height:7.6px;color:#5f86cc;z-index:5;">(6,973,940)</span></div>
<div style="left:0;top:0;width:988px;height:592px;overflow:hidden;z-index:5;pointer-events:none"><span class="t" style="left:735.29px;top:186.17px;font-size:7.6px;line-height:7.6px;color:#333333;z-index:5;">(0.0%)</span></div>
<div style="left:0;top:0;width:988px;height:592px;overflow:hidden;z-index:5;pointer-events:none"><span class="t" style="left:718.65px;top:196.97px;font-size:7.6px;line-height:7.6px;color:#5f86cc;z-index:5;">34,315,771</span></div>
<div style="left:0;top:0;width:988px;height:592px;overflow:hidden;z-index:5;pointer-events:none"><span class="t" style="left:729.38px;top:219.17px;font-size:7.6px;line-height:7.6px;color:#5f86cc;z-index:5;">(20,532)</span></div>
<div style="left:0;top:0;width:988px;height:592px;overflow:hidden;z-index:5;pointer-events:none"><span class="t" style="left:718.65px;top:229.97px;font-size:7.6px;line-height:7.6px;color:#5f86cc;z-index:5;">34,295,239</span></div>
<div style="left:0;top:0;width:988px;height:592px;overflow:hidden;z-index:5;pointer-events:none"><span class="t" style="left:737.4px;top:252.07px;font-size:7.6px;line-height:7.6px;color:#333333;z-index:5;">(20%)</span></div>
<div style="left:0;top:0;width:988px;height:592px;overflow:hidden;z-index:5;pointer-events:none"><span class="t" style="left:718.82px;top:262.57px;font-size:7.6px;line-height:7.6px;color:#5f86cc;z-index:5;">(6,971,305)</span></div>
<div style="left:0;top:0;width:988px;height:592px;overflow:hidden;z-index:5;pointer-events:none"><span class="t" style="left:793.26px;top:186.17px;font-size:7.6px;line-height:7.6px;color:#333333;z-index:5;">(0.0%)</span></div>
<div style="left:0;top:0;width:988px;height:592px;overflow:hidden;z-index:5;pointer-events:none"><span class="t" style="left:776.62px;top:196.97px;font-size:7.6px;line-height:7.6px;color:#5f86cc;z-index:5;">34,302,278</span></div>
<div style="left:0;top:0;width:988px;height:592px;overflow:hidden;z-index:5;pointer-events:none"><span class="t" style="left:787.35px;top:219.17px;font-size:7.6px;line-height:7.6px;color:#5f86cc;z-index:5;">(20,532)</span></div>
<div style="left:0;top:0;width:988px;height:592px;overflow:hidden;z-index:5;pointer-events:none"><span class="t" style="left:776.62px;top:229.97px;font-size:7.6px;line-height:7.6px;color:#5f86cc;z-index:5;">34,281,746</span></div>
<div style="left:0;top:0;width:988px;height:592px;overflow:hidden;z-index:5;pointer-events:none"><span class="t" style="left:795.37px;top:252.07px;font-size:7.6px;line-height:7.6px;color:#333333;z-index:5;">(20%)</span></div>
<div style="left:0;top:0;width:988px;height:592px;overflow:hidden;z-index:5;pointer-events:none"><span class="t" style="left:776.79px;top:262.57px;font-size:7.6px;line-height:7.6px;color:#5f86cc;z-index:5;">(6,968,607)</span></div>
<div style="left:0;top:0;width:988px;height:592px;overflow:hidden;z-index:5;pointer-events:none"><span class="t" style="left:851.23px;top:186.17px;font-size:7.6px;line-height:7.6px;color:#333333;z-index:5;">(0.0%)</span></div>
<div style="left:0;top:0;width:988px;height:592px;overflow:hidden;z-index:5;pointer-events:none"><span class="t" style="left:834.59px;top:196.97px;font-size:7.6px;line-height:7.6px;color:#5f86cc;z-index:5;">34,288,449</span></div>
<div style="left:0;top:0;width:988px;height:592px;overflow:hidden;z-index:5;pointer-events:none"><span class="t" style="left:845.32px;top:219.17px;font-size:7.6px;line-height:7.6px;color:#5f86cc;z-index:5;">(20,532)</span></div>
<div style="left:0;top:0;width:988px;height:592px;overflow:hidden;z-index:5;pointer-events:none"><span class="t" style="left:834.59px;top:229.97px;font-size:7.6px;line-height:7.6px;color:#5f86cc;z-index:5;">34,267,917</span></div>
<div style="left:0;top:0;width:988px;height:592px;overflow:hidden;z-index:5;pointer-events:none"><span class="t" style="left:853.34px;top:252.07px;font-size:7.6px;line-height:7.6px;color:#333333;z-index:5;">(20%)</span></div>
<div style="left:0;top:0;width:988px;height:592px;overflow:hidden;z-index:5;pointer-events:none"><span class="t" style="left:834.76px;top:262.57px;font-size:7.6px;line-height:7.6px;color:#5f86cc;z-index:5;">(6,965,841)</span></div>
<div style="left:0;top:0;width:988px;height:592px;overflow:hidden;z-index:5;pointer-events:none"><span class="t" style="left:917.35px;top:186.17px;font-size:7.6px;line-height:7.6px;color:#333333;z-index:5;">–</span></div>
<div style="left:0;top:0;width:988px;height:592px;overflow:hidden;z-index:5;pointer-events:none"><span class="t" style="left:892.56px;top:196.97px;font-size:7.6px;line-height:7.6px;color:#5f86cc;z-index:5;">34,288,449</span></div>
<div style="left:0;top:0;width:988px;height:592px;overflow:hidden;z-index:5;pointer-events:none"><span class="t" style="left:903.29px;top:219.17px;font-size:7.6px;line-height:7.6px;color:#5f86cc;z-index:5;">(20,532)</span></div>
<div style="left:0;top:0;width:988px;height:592px;overflow:hidden;z-index:5;pointer-events:none"><span class="t" style="left:892.56px;top:229.97px;font-size:7.6px;line-height:7.6px;color:#5f86cc;z-index:5;">34,267,917</span></div>
<div style="left:0;top:0;width:988px;height:592px;overflow:hidden;z-index:5;pointer-events:none"><span class="t" style="left:911.31px;top:252.07px;font-size:7.6px;line-height:7.6px;color:#333333;z-index:5;">(20%)</span></div>
<div style="left:0;top:0;width:988px;height:592px;overflow:hidden;z-index:5;pointer-events:none"><span class="t" style="left:892.73px;top:262.57px;font-size:7.6px;line-height:7.6px;color:#5f86cc;z-index:5;">(6,965,841)</span></div>
<div style="left:0;top:0;width:988px;height:592px;overflow:hidden;z-index:5;pointer-events:none"><span class="t" style="left:967.17px;top:186.17px;font-size:7.6px;line-height:7.6px;color:#333333;z-index:5;">(0.1%)</span></div>
<div style="left:0;top:0;width:988px;height:592px;overflow:hidden;z-index:5;pointer-events:none"><span class="t" style="left:950.53px;top:196.97px;font-size:7.6px;line-height:7.6px;color:#5f86cc;z-index:5;">34,268,954</span></div>
<div style="left:0;top:0;width:988px;height:592px;overflow:hidden;z-index:5;pointer-events:none"><span class="t" style="left:961.26px;top:219.17px;font-size:7.6px;line-height:7.6px;color:#5f86cc;z-index:5;">(20,532)</span></div>
<div style="left:0;top:0;width:988px;height:592px;overflow:hidden;z-index:5;pointer-events:none"><span class="t" style="left:950.53px;top:229.97px;font-size:7.6px;line-height:7.6px;color:#5f86cc;z-index:5;">34,248,422</span></div>
<div style="left:0;top:0;width:988px;height:592px;overflow:hidden;z-index:5;pointer-events:none"><span class="t" style="left:969.28px;top:252.07px;font-size:7.6px;line-height:7.6px;color:#333333;z-index:5;">(20%)</span></div>
<div style="left:0;top:0;width:988px;height:592px;overflow:hidden;z-index:5;pointer-events:none"><span class="t" style="left:950.7px;top:262.57px;font-size:7.6px;line-height:7.6px;color:#5f86cc;z-index:5;">(6,961,942)</span></div>
<span class="t" style="left:702.41px;top:300.91px;font-size:7.2px;line-height:7.2px;color:#1a1a1a;z-index:5;font-weight:700;transform:scaleX(0.966);transform-origin:center 0;">Free Cash Flow</span>
<span class="t" style="left:302.3px;top:326.15px;font-size:7.5px;line-height:7.5px;color:#333333;z-index:5;transform:scaleX(0.904);transform-origin:left 0;">EBITDA</span>
<span class="t" style="left:302.3px;top:341.65px;font-size:7.5px;line-height:7.5px;color:#333333;z-index:5;transform:scaleX(1.050);transform-origin:left 0;">Current Taxes</span>
<span class="t" style="left:302.3px;top:357.15px;font-size:7.5px;line-height:7.5px;color:#333333;z-index:5;transform:scaleX(0.926);transform-origin:left 0;">CapEX</span>
<span class="t" style="left:302.3px;top:372.65px;font-size:7.5px;line-height:7.5px;color:#333333;z-index:5;transform:scaleX(1.039);transform-origin:left 0;">Cash from Working Capital</span>
<span class="t" style="left:302.3px;top:384.15px;font-size:7.5px;line-height:7.5px;color:#333333;z-index:5;transform:scaleX(1.009);transform-origin:left 0;">Unlevered Free Cash Flow</span>
<div style="left:0;top:0;width:988px;height:592px;overflow:hidden;z-index:5;pointer-events:none"><span class="t" style="left:484.94px;top:326.15px;font-size:7.5px;line-height:7.5px;color:#333333;z-index:5;">31,608,874</span></div>
<div style="left:0;top:0;width:988px;height:592px;overflow:hidden;z-index:5;pointer-events:none"><span class="t" style="left:489.11px;top:341.65px;font-size:7.5px;line-height:7.5px;color:#333333;z-index:5;">6,321,775</span></div>
<div style="left:0;top:0;width:988px;height:592px;overflow:hidden;z-index:5;pointer-events:none"><span class="t" style="left:489.11px;top:357.15px;font-size:7.5px;line-height:7.5px;color:#333333;z-index:5;">3,066,950</span></div>
<div style="left:0;top:0;width:988px;height:592px;overflow:hidden;z-index:5;pointer-events:none"><span class="t" style="left:474.52px;top:372.65px;font-size:7.5px;line-height:7.5px;color:#6d93d6;z-index:5;">2,277,698,759</span></div>
<div style="left:0;top:0;width:988px;height:592px;overflow:hidden;z-index:5;pointer-events:none"><span class="t" style="left:475.22px;top:384.54px;font-size:7.4px;line-height:7.4px;color:#111;z-index:5;font-weight:700;">2,318,696,358</span></div>
<div style="left:0;top:0;width:988px;height:592px;overflow:hidden;z-index:5;pointer-events:none"><span class="t" style="left:542.91px;top:326.15px;font-size:7.5px;line-height:7.5px;color:#333333;z-index:5;">31,585,678</span></div>
<div style="left:0;top:0;width:988px;height:592px;overflow:hidden;z-index:5;pointer-events:none"><span class="t" style="left:547.08px;top:341.65px;font-size:7.5px;line-height:7.5px;color:#333333;z-index:5;">6,317,136</span></div>
<div style="left:0;top:0;width:988px;height:592px;overflow:hidden;z-index:5;pointer-events:none"><span class="t" style="left:547.08px;top:357.15px;font-size:7.5px;line-height:7.5px;color:#333333;z-index:5;">3,066,950</span></div>
<div style="left:0;top:0;width:988px;height:592px;overflow:hidden;z-index:5;pointer-events:none"><span class="t" style="left:532.49px;top:372.65px;font-size:7.5px;line-height:7.5px;color:#6d93d6;z-index:5;">2,702,084,028</span></div>
<div style="left:0;top:0;width:988px;height:592px;overflow:hidden;z-index:5;pointer-events:none"><span class="t" style="left:533.19px;top:384.54px;font-size:7.4px;line-height:7.4px;color:#111;z-index:5;font-weight:700;">2,743,053,791</span></div>
<div style="left:0;top:0;width:988px;height:592px;overflow:hidden;z-index:5;pointer-events:none"><span class="t" style="left:600.88px;top:326.15px;font-size:7.5px;line-height:7.5px;color:#333333;z-index:5;">31,585,678</span></div>
<div style="left:0;top:0;width:988px;height:592px;overflow:hidden;z-index:5;pointer-events:none"><span class="t" style="left:605.61px;top:341.65px;font-size:7.5px;line-height:7.5px;color:#333333;z-index:5;">6,464,511</span></div>
<div style="left:0;top:0;width:988px;height:592px;overflow:hidden;z-index:5;pointer-events:none"><span class="t" style="left:605.05px;top:357.15px;font-size:7.5px;line-height:7.5px;color:#333333;z-index:5;">3,066,950</span></div>
<div style="left:0;top:0;width:988px;height:592px;overflow:hidden;z-index:5;pointer-events:none"><span class="t" style="left:590.46px;top:372.65px;font-size:7.5px;line-height:7.5px;color:#6d93d6;z-index:5;">3,063,674,684</span></div>
<div style="left:0;top:0;width:988px;height:592px;overflow:hidden;z-index:5;pointer-events:none"><span class="t" style="left:591.16px;top:384.54px;font-size:7.4px;line-height:7.4px;color:#111;z-index:5;font-weight:700;">3,104,791,823</span></div>
<div style="left:0;top:0;width:988px;height:592px;overflow:hidden;z-index:5;pointer-events:none"><span class="t" style="left:658.85px;top:326.15px;font-size:7.5px;line-height:7.5px;color:#333333;z-index:5;">34,328,942</span></div>
<div style="left:0;top:0;width:988px;height:592px;overflow:hidden;z-index:5;pointer-events:none"><span class="t" style="left:663.02px;top:341.65px;font-size:7.5px;line-height:7.5px;color:#333333;z-index:5;">6,973,940</span></div>
<div style="left:0;top:0;width:988px;height:592px;overflow:hidden;z-index:5;pointer-events:none"><span class="t" style="left:663.02px;top:357.15px;font-size:7.5px;line-height:7.5px;color:#333333;z-index:5;">3,066,950</span></div>
<div style="left:0;top:0;width:988px;height:592px;overflow:hidden;z-index:5;pointer-events:none"><span class="t" style="left:648.43px;top:372.65px;font-size:7.5px;line-height:7.5px;color:#6d93d6;z-index:5;">3,422,151,278</span></div>
<div style="left:0;top:0;width:988px;height:592px;overflow:hidden;z-index:5;pointer-events:none"><span class="t" style="left:649.13px;top:384.54px;font-size:7.4px;line-height:7.4px;color:#111;z-index:5;font-weight:700;">3,466,521,109</span></div>
<div style="left:0;top:0;width:988px;height:592px;overflow:hidden;z-index:5;pointer-events:none"><span class="t" style="left:716.82px;top:326.15px;font-size:7.5px;line-height:7.5px;color:#333333;z-index:5;">34,315,771</span></div>
<div style="left:0;top:0;width:988px;height:592px;overflow:hidden;z-index:5;pointer-events:none"><span class="t" style="left:720.99px;top:341.65px;font-size:7.5px;line-height:7.5px;color:#333333;z-index:5;">6,971,305</span></div>
<div style="left:0;top:0;width:988px;height:592px;overflow:hidden;z-index:5;pointer-events:none"><span class="t" style="left:720.99px;top:357.15px;font-size:7.5px;line-height:7.5px;color:#333333;z-index:5;">3,066,950</span></div>
<div style="left:0;top:0;width:988px;height:592px;overflow:hidden;z-index:5;pointer-events:none"><span class="t" style="left:706.4px;top:372.65px;font-size:7.5px;line-height:7.5px;color:#6d93d6;z-index:5;">3,775,286,735</span></div>
<div style="left:0;top:0;width:988px;height:592px;overflow:hidden;z-index:5;pointer-events:none"><span class="t" style="left:707.1px;top:384.54px;font-size:7.4px;line-height:7.4px;color:#111;z-index:5;font-weight:700;">3,819,640,762</span></div>
<div style="left:0;top:0;width:988px;height:592px;overflow:hidden;z-index:5;pointer-events:none"><span class="t" style="left:774.79px;top:326.15px;font-size:7.5px;line-height:7.5px;color:#333333;z-index:5;">34,302,278</span></div>
<div style="left:0;top:0;width:988px;height:592px;overflow:hidden;z-index:5;pointer-events:none"><span class="t" style="left:778.96px;top:341.65px;font-size:7.5px;line-height:7.5px;color:#333333;z-index:5;">6,968,607</span></div>
<div style="left:0;top:0;width:988px;height:592px;overflow:hidden;z-index:5;pointer-events:none"><span class="t" style="left:778.96px;top:357.15px;font-size:7.5px;line-height:7.5px;color:#333333;z-index:5;">3,066,950</span></div>
<div style="left:0;top:0;width:988px;height:592px;overflow:hidden;z-index:5;pointer-events:none"><span class="t" style="left:764.37px;top:372.65px;font-size:7.5px;line-height:7.5px;color:#6d93d6;z-index:5;">4,122,632,700</span></div>
<div style="left:0;top:0;width:988px;height:592px;overflow:hidden;z-index:5;pointer-events:none"><span class="t" style="left:765.07px;top:384.54px;font-size:7.4px;line-height:7.4px;color:#111;z-index:5;font-weight:700;">4,166,970,535</span></div>
<div style="left:0;top:0;width:988px;height:592px;overflow:hidden;z-index:5;pointer-events:none"><span class="t" style="left:832.76px;top:326.15px;font-size:7.5px;line-height:7.5px;color:#333333;z-index:5;">34,288,449</span></div>
<div style="left:0;top:0;width:988px;height:592px;overflow:hidden;z-index:5;pointer-events:none"><span class="t" style="left:836.93px;top:341.65px;font-size:7.5px;line-height:7.5px;color:#333333;z-index:5;">6,965,841</span></div>
<div style="left:0;top:0;width:988px;height:592px;overflow:hidden;z-index:5;pointer-events:none"><span class="t" style="left:836.93px;top:357.15px;font-size:7.5px;line-height:7.5px;color:#333333;z-index:5;">3,066,950</span></div>
<div style="left:0;top:0;width:988px;height:592px;overflow:hidden;z-index:5;pointer-events:none"><span class="t" style="left:822.34px;top:372.65px;font-size:7.5px;line-height:7.5px;color:#6d93d6;z-index:5;">4,469,972,398</span></div>
<div style="left:0;top:0;width:988px;height:592px;overflow:hidden;z-index:5;pointer-events:none"><span class="t" style="left:823.04px;top:384.54px;font-size:7.4px;line-height:7.4px;color:#111;z-index:5;font-weight:700;">4,514,293,638</span></div>
<div style="left:0;top:0;width:988px;height:592px;overflow:hidden;z-index:5;pointer-events:none"><span class="t" style="left:890.73px;top:326.15px;font-size:7.5px;line-height:7.5px;color:#333333;z-index:5;">34,288,449</span></div>
<div style="left:0;top:0;width:988px;height:592px;overflow:hidden;z-index:5;pointer-events:none"><span class="t" style="left:894.9px;top:341.65px;font-size:7.5px;line-height:7.5px;color:#333333;z-index:5;">6,965,841</span></div>
<div style="left:0;top:0;width:988px;height:592px;overflow:hidden;z-index:5;pointer-events:none"><span class="t" style="left:894.9px;top:357.15px;font-size:7.5px;line-height:7.5px;color:#333333;z-index:5;">3,066,950</span></div>
<div style="left:0;top:0;width:988px;height:592px;overflow:hidden;z-index:5;pointer-events:none"><span class="t" style="left:880.31px;top:372.65px;font-size:7.5px;line-height:7.5px;color:#6d93d6;z-index:5;">4,817,324,541</span></div>
<div style="left:0;top:0;width:988px;height:592px;overflow:hidden;z-index:5;pointer-events:none"><span class="t" style="left:881.01px;top:384.54px;font-size:7.4px;line-height:7.4px;color:#111;z-index:5;font-weight:700;">4,861,645,782</span></div>
<div style="left:0;top:0;width:988px;height:592px;overflow:hidden;z-index:5;pointer-events:none"><span class="t" style="left:948.7px;top:326.15px;font-size:7.5px;line-height:7.5px;color:#333333;z-index:5;">34,268,954</span></div>
<div style="left:0;top:0;width:988px;height:592px;overflow:hidden;z-index:5;pointer-events:none"><span class="t" style="left:952.87px;top:341.65px;font-size:7.5px;line-height:7.5px;color:#333333;z-index:5;">6,961,942</span></div>
<div style="left:0;top:0;width:988px;height:592px;overflow:hidden;z-index:5;pointer-events:none"><span class="t" style="left:952.87px;top:357.15px;font-size:7.5px;line-height:7.5px;color:#333333;z-index:5;">3,066,950</span></div>
<div style="left:0;top:0;width:988px;height:592px;overflow:hidden;z-index:5;pointer-events:none"><span class="t" style="left:938.28px;top:372.65px;font-size:7.5px;line-height:7.5px;color:#6d93d6;z-index:5;">5,164,702,029</span></div>
<div style="left:0;top:0;width:988px;height:592px;overflow:hidden;z-index:5;pointer-events:none"><span class="t" style="left:938.98px;top:384.54px;font-size:7.4px;line-height:7.4px;color:#111;z-index:5;font-weight:700;">5,208,999,875</span></div>
<span class="t" style="left:28px;top:444.26px;font-size:8.2px;line-height:8.2px;color:#fff;z-index:5;font-weight:700;transform:scaleX(0.882);transform-origin:left 0;">Discounted Cash Flow Schedule</span>
<div style="left:0;top:0;width:988px;height:592px;overflow:hidden;z-index:5;pointer-events:none"><span class="t" style="left:506.48px;top:444.13px;font-size:8px;line-height:8px;color:#fff;z-index:5;font-weight:700;transform:scaleX(1.101);transform-origin:right 0;">2029</span></div>
<div style="left:0;top:0;width:988px;height:592px;overflow:hidden;z-index:5;pointer-events:none"><span class="t" style="left:564.45px;top:444.13px;font-size:8px;line-height:8px;color:#fff;z-index:5;font-weight:700;transform:scaleX(1.101);transform-origin:right 0;">2030</span></div>
<div style="left:0;top:0;width:988px;height:592px;overflow:hidden;z-index:5;pointer-events:none"><span class="t" style="left:622.42px;top:444.13px;font-size:8px;line-height:8px;color:#fff;z-index:5;font-weight:700;transform:scaleX(1.101);transform-origin:right 0;">2031</span></div>
<div style="left:0;top:0;width:988px;height:592px;overflow:hidden;z-index:5;pointer-events:none"><span class="t" style="left:680.39px;top:444.13px;font-size:8px;line-height:8px;color:#fff;z-index:5;font-weight:700;transform:scaleX(1.101);transform-origin:right 0;">2032</span></div>
<div style="left:0;top:0;width:988px;height:592px;overflow:hidden;z-index:5;pointer-events:none"><span class="t" style="left:738.36px;top:444.13px;font-size:8px;line-height:8px;color:#fff;z-index:5;font-weight:700;transform:scaleX(1.101);transform-origin:right 0;">2033</span></div>
<div style="left:0;top:0;width:988px;height:592px;overflow:hidden;z-index:5;pointer-events:none"><span class="t" style="left:796.33px;top:444.13px;font-size:8px;line-height:8px;color:#fff;z-index:5;font-weight:700;transform:scaleX(1.101);transform-origin:right 0;">2034</span></div>
<div style="left:0;top:0;width:988px;height:592px;overflow:hidden;z-index:5;pointer-events:none"><span class="t" style="left:854.3px;top:444.13px;font-size:8px;line-height:8px;color:#fff;z-index:5;font-weight:700;transform:scaleX(1.101);transform-origin:right 0;">2035</span></div>
<div style="left:0;top:0;width:988px;height:592px;overflow:hidden;z-index:5;pointer-events:none"><span class="t" style="left:912.27px;top:444.13px;font-size:8px;line-height:8px;color:#fff;z-index:5;font-weight:700;transform:scaleX(1.101);transform-origin:right 0;">2036</span></div>
<div style="left:0;top:0;width:988px;height:592px;overflow:hidden;z-index:5;pointer-events:none"><span class="t" style="left:970.24px;top:444.13px;font-size:8px;line-height:8px;color:#fff;z-index:5;font-weight:700;transform:scaleX(1.101);transform-origin:right 0;">2037</span></div>
<div style="left:0;top:0;width:988px;height:592px;overflow:hidden;z-index:5;pointer-events:none"><span class="t" style="left:474.52px;top:485.15px;font-size:7.5px;line-height:7.5px;color:#333333;z-index:5;transform:scaleX(0.959);transform-origin:right 0;">2,318,696,358</span></div>
<div style="left:0;top:0;width:988px;height:592px;overflow:hidden;z-index:5;pointer-events:none"><span class="t" style="left:474.52px;top:544.85px;font-size:7.5px;line-height:7.5px;color:#333333;z-index:5;transform:scaleX(0.959);transform-origin:right 0;">2,318,696,358</span></div>
<div style="left:0;top:0;width:988px;height:592px;overflow:hidden;z-index:5;pointer-events:none"><span class="t" style="left:532.49px;top:485.15px;font-size:7.5px;line-height:7.5px;color:#333333;z-index:5;transform:scaleX(0.959);transform-origin:right 0;">2,743,053,791</span></div>
<div style="left:0;top:0;width:988px;height:592px;overflow:hidden;z-index:5;pointer-events:none"><span class="t" style="left:532.49px;top:544.85px;font-size:7.5px;line-height:7.5px;color:#333333;z-index:5;transform:scaleX(0.959);transform-origin:right 0;">2,743,053,791</span></div>
<div style="left:0;top:0;width:988px;height:592px;overflow:hidden;z-index:5;pointer-events:none"><span class="t" style="left:590.46px;top:485.15px;font-size:7.5px;line-height:7.5px;color:#333333;z-index:5;transform:scaleX(0.959);transform-origin:right 0;">3,104,791,823</span></div>
<div style="left:0;top:0;width:988px;height:592px;overflow:hidden;z-index:5;pointer-events:none"><span class="t" style="left:590.46px;top:544.85px;font-size:7.5px;line-height:7.5px;color:#333333;z-index:5;transform:scaleX(0.959);transform-origin:right 0;">3,104,791,823</span></div>
<div style="left:0;top:0;width:988px;height:592px;overflow:hidden;z-index:5;pointer-events:none"><span class="t" style="left:648.43px;top:485.15px;font-size:7.5px;line-height:7.5px;color:#333333;z-index:5;transform:scaleX(0.959);transform-origin:right 0;">3,466,521,109</span></div>
<div style="left:0;top:0;width:988px;height:592px;overflow:hidden;z-index:5;pointer-events:none"><span class="t" style="left:648.43px;top:544.85px;font-size:7.5px;line-height:7.5px;color:#333333;z-index:5;transform:scaleX(0.959);transform-origin:right 0;">3,466,521,109</span></div>
<div style="left:0;top:0;width:988px;height:592px;overflow:hidden;z-index:5;pointer-events:none"><span class="t" style="left:706.4px;top:485.15px;font-size:7.5px;line-height:7.5px;color:#333333;z-index:5;transform:scaleX(0.959);transform-origin:right 0;">3,819,640,762</span></div>
<div style="left:0;top:0;width:988px;height:592px;overflow:hidden;z-index:5;pointer-events:none"><span class="t" style="left:706.4px;top:544.85px;font-size:7.5px;line-height:7.5px;color:#333333;z-index:5;transform:scaleX(0.959);transform-origin:right 0;">3,819,640,762</span></div>
<div style="left:0;top:0;width:988px;height:592px;overflow:hidden;z-index:5;pointer-events:none"><span class="t" style="left:764.37px;top:485.15px;font-size:7.5px;line-height:7.5px;color:#333333;z-index:5;transform:scaleX(0.959);transform-origin:right 0;">4,166,970,535</span></div>
<div style="left:0;top:0;width:988px;height:592px;overflow:hidden;z-index:5;pointer-events:none"><span class="t" style="left:764.37px;top:544.85px;font-size:7.5px;line-height:7.5px;color:#333333;z-index:5;transform:scaleX(0.959);transform-origin:right 0;">4,166,970,535</span></div>
<div style="left:0;top:0;width:988px;height:592px;overflow:hidden;z-index:5;pointer-events:none"><span class="t" style="left:822.34px;top:485.15px;font-size:7.5px;line-height:7.5px;color:#333333;z-index:5;transform:scaleX(0.959);transform-origin:right 0;">4,514,293,638</span></div>
<div style="left:0;top:0;width:988px;height:592px;overflow:hidden;z-index:5;pointer-events:none"><span class="t" style="left:822.34px;top:544.85px;font-size:7.5px;line-height:7.5px;color:#333333;z-index:5;transform:scaleX(0.959);transform-origin:right 0;">4,514,293,638</span></div>
<div style="left:0;top:0;width:988px;height:592px;overflow:hidden;z-index:5;pointer-events:none"><span class="t" style="left:880.31px;top:485.15px;font-size:7.5px;line-height:7.5px;color:#333333;z-index:5;transform:scaleX(0.959);transform-origin:right 0;">4,861,645,782</span></div>
<div style="left:0;top:0;width:988px;height:592px;overflow:hidden;z-index:5;pointer-events:none"><span class="t" style="left:880.31px;top:544.85px;font-size:7.5px;line-height:7.5px;color:#333333;z-index:5;transform:scaleX(0.959);transform-origin:right 0;">4,861,645,782</span></div>
<div style="left:0;top:0;width:988px;height:592px;overflow:hidden;z-index:5;pointer-events:none"><span class="t" style="left:938.28px;top:485.15px;font-size:7.5px;line-height:7.5px;color:#333333;z-index:5;transform:scaleX(0.959);transform-origin:right 0;">5,208,999,875</span></div>
<div style="left:0;top:0;width:988px;height:592px;overflow:hidden;z-index:5;pointer-events:none"><span class="t" style="left:938.28px;top:544.85px;font-size:7.5px;line-height:7.5px;color:#333333;z-index:5;transform:scaleX(0.959);transform-origin:right 0;">5,208,999,875</span></div>
<span class="t" style="left:92.4px;top:530.42px;font-size:7.3px;line-height:7.3px;color:#111;z-index:5;font-weight:700;transform:scaleX(0.990);transform-origin:left 0;">ASSUMPTIONS</span>
<span class="t" style="left:471px;top:530.22px;font-size:7.3px;line-height:7.3px;color:#111;z-index:5;font-weight:700;transform:scaleX(0.952);transform-origin:left 0;">CASH FLOW PROFILES</span>
<span class="t" style="left:97.8px;top:545.65px;font-size:7.5px;line-height:7.5px;color:#333333;z-index:5;transform:scaleX(1.011);transform-origin:left 0;">First Year of Forecast</span>
<span class="t" style="left:255.16px;top:545.65px;font-size:7.5px;line-height:7.5px;color:#4f8fb0;z-index:5;">2028</span>
<span class="t" style="left:359.6px;top:545.65px;font-size:7.5px;line-height:7.5px;color:#333333;z-index:5;transform:scaleX(1.030);transform-origin:left 0;">Discrete Forecast</span>
<span class="t" style="left:79.5px;top:565.52px;font-size:8.6px;line-height:8.6px;color:#333;z-index:10;transform:scaleX(0.958);transform-origin:left 0;">CAPEX 2045</span>
<span class="t" style="left:146px;top:565.52px;font-size:8.6px;line-height:8.6px;color:#333;z-index:10;transform:scaleX(0.969);transform-origin:left 0;">OPEX 2045</span>
<span class="t" style="left:207.6px;top:565.52px;font-size:8.6px;line-height:8.6px;color:#333;z-index:10;transform:scaleX(1.005);transform-origin:left 0;">Sales Summary Charts</span>
<span class="t" style="left:316px;top:565.52px;font-size:8.6px;line-height:8.6px;color:#333;z-index:10;transform:scaleX(1.025);transform-origin:left 0;">Key Metrics Charts</span>
<span class="t" style="left:408px;top:565.52px;font-size:8.6px;line-height:8.6px;color:#333;z-index:10;transform:scaleX(1.011);transform-origin:left 0;">Charts</span>
<span class="t" style="left:450.4px;top:565.52px;font-size:8.6px;line-height:8.6px;color:#333;z-index:10;transform:scaleX(0.907);transform-origin:left 0;">BEA</span>
<span class="t" style="left:483.5px;top:565.52px;font-size:8.6px;line-height:8.6px;color:#333;z-index:10;transform:scaleX(0.954);transform-origin:left 0;">Expenses</span>
<span class="t" style="left:537px;top:565.52px;font-size:8.6px;line-height:8.6px;color:#333;z-index:10;transform:scaleX(1.014);transform-origin:left 0;">COGS Assumptions</span>
<span class="t" style="left:633.3px;top:565.52px;font-size:8.6px;line-height:8.6px;color:#333;z-index:10;transform:scaleX(1.019);transform-origin:left 0;">Salaries Assumptions</span>
<span class="t" style="left:797.9px;top:565.52px;font-size:8.6px;line-height:8.6px;color:#333;z-index:10;transform:scaleX(0.978);transform-origin:left 0;">CAPS Table</span>
<span class="t" style="left:860.6px;top:565.52px;font-size:8.6px;line-height:8.6px;color:#333;z-index:10;transform:scaleX(1.025);transform-origin:left 0;">Char</span>
<span class="t" style="left:735.4px;top:564.52px;font-size:8.6px;line-height:8.6px;color:#222;z-index:10;font-weight:700;transform:scaleX(1.016);transform-origin:left 0;">DCF Model</span>
<span class="t" style="left:7.7px;top:583.45px;font-size:7.5px;line-height:7.5px;color:#444;z-index:10;transform:scaleX(0.830);transform-origin:left 0;">Ready</span>
<span class="t" style="left:72px;top:583.15px;font-size:7.5px;line-height:7.5px;color:#333;z-index:10;font-weight:700;transform:scaleX(0.882);transform-origin:left 0;">Accessibility: Investigate</span>
<span class="t" style="left:977.7px;top:583.15px;font-size:7.5px;line-height:7.5px;color:#444;z-index:10;transform:scaleX(0.819);transform-origin:left 0;">82%</span>
<svg style="left:0;top:0;z-index:20" width="1000" height="592" viewBox="0 0 1000 592">
<!-- excel logo -->
<rect x="10.5" y="10" width="9.8" height="10.6" rx="1.2" fill="#c9f0d6"/>
<rect x="15.2" y="11.2" width="4" height="8.2" fill="#1a7c45"/>
<rect x="16.2" y="12.4" width="2" height="1.5" fill="#c9f0d6"/><rect x="16.2" y="15" width="2" height="1.5" fill="#c9f0d6"/>
<text x="11.6" y="18.6" font-family="Liberation Sans" font-weight="700" font-size="7" fill="#1a7c45">X</text>
<!-- save -->
<rect x="32" y="10.5" width="9.2" height="9.8" rx="1" fill="none" stroke="#c9f0d6" stroke-width="1.2"/>
<rect x="34.2" y="11" width="4.8" height="3" fill="none" stroke="#c9f0d6" stroke-width="1"/>
<rect x="34" y="16" width="5.2" height="4" fill="none" stroke="#c9f0d6" stroke-width="1"/>
<!-- undo -->
<path d="M51 12.5 v4 h4 M51.5 16.2 a4.2 4.2 0 1 1 2.5 4.3" fill="none" stroke="#5faf80" stroke-width="1.2"/>
<rect x="63.8" y="14.3" width="2.6" height="1" fill="#4d9f6f"/>
<path d="M83.5 12.5 v4 h-4 M83 16.2 a4.2 4.2 0 1 0 -2.5 4.3" fill="none" stroke="#5faf80" stroke-width="1.2"/>
<rect x="90.5" y="14.3" width="4.4" height="1" fill="#4d9f6f"/>
<rect x="101.3" y="12.2" width="5.6" height="1" fill="#a9dcbc"/>
<path d="M101.5 14.5 h5.4 l-2.7 3z" fill="#a9dcbc"/>
<!-- search magnifier -->
<circle cx="401" cy="13.8" r="3.2" fill="none" stroke="#4a5e50" stroke-width="1.1"/>
<path d="M398.8 16.2 l-3 3" stroke="#4a5e50" stroke-width="1.2"/>
<!-- avatar -->
<circle cx="891.7" cy="15.6" r="7.6" fill="#8db898"/>
<circle cx="891.7" cy="15.6" r="5" fill="#a9939a"/>
<rect x="888.5" y="12" width="6" height="7" rx="1.5" fill="#d7c8cc"/>
<rect x="889.5" y="15" width="4" height="2" fill="#9a8a90"/>
<!-- window controls -->
<rect x="918" y="14.5" width="8" height="1" fill="#e6f3ea"/>
<rect x="950" y="13.8" width="6.5" height="6.2" rx="1.2" fill="none" stroke="#e6f3ea" stroke-width="1.1"/>
<path d="M951.8 12.5 h5.2 a1 1 0 0 1 1 1 v5.2" fill="none" stroke="#e6f3ea" stroke-width="1"/>
<path d="M982 12 l8.5 8 M990.5 12 l-8.5 8" stroke="#e6f3ea" stroke-width="1.1"/>
<!-- share icon -->
<path d="M949.5 39.5 v5.5 h7 v-3" fill="none" stroke="#e8f5ec" stroke-width="0.9"/>
<path d="M951.5 43 q0.5 -4 4.5 -4 v-1.6 l2.6 2.6 l-2.6 2.6 v-1.6 q-3 0 -4.5 2z" fill="none" stroke="#e8f5ec" stroke-width="0.8"/>
<path d="M986.3 40 l1.8 1.8 l1.8 -1.8" fill="none" stroke="#e8f5ec" stroke-width="0.9"/>
<!-- corner triangle -->
<path d="M11.5 52.5 v7 h-7z" fill="#b8b8b8"/>
<!-- scrollbar arrows -->
<path d="M990.5 58.5 l3 -3.5 l3 3.5z" fill="#606060"/>
<path d="M990.5 551 l3 3.5 l3 -3.5z" fill="#606060"/>
<!-- tab nav -->
<path d="M20.5 566.5 l-2.5 3 l2.5 3" fill="none" stroke="#9a9a9a" stroke-width="1"/>
<path d="M37.5 566.5 l2.5 3 l-2.5 3" fill="none" stroke="#9a9a9a" stroke-width="1"/>
<circle cx="57.8" cy="569.4" r="0.9" fill="#333"/><circle cx="60.1" cy="569.4" r="0.9" fill="#333"/><circle cx="62.4" cy="569.4" r="0.9" fill="#333"/>
<circle cx="887.5" cy="569" r="0.9" fill="#333"/><circle cx="889.8" cy="569" r="0.9" fill="#333"/><circle cx="892.1" cy="569" r="0.9" fill="#333"/>
<path d="M911 564.5 v9 M906.5 569 h9" stroke="#444" stroke-width="1"/>
<circle cx="932" cy="565.5" r="0.8" fill="#555"/><circle cx="932" cy="569" r="0.8" fill="#555"/><circle cx="932" cy="572.5" r="0.8" fill="#555"/>
<path d="M950 566.5 l-2.8 2.5 l2.8 2.5z" fill="#555"/>
<rect x="954" y="566.3" width="12.5" height="5.4" rx="2.7" fill="#777"/>
<path d="M982 566.5 l2.8 2.5 l-2.8 2.5z" fill="#555"/>
<!-- status bar icons -->
<rect x="41" y="582.5" width="7" height="7" fill="none" stroke="#555" stroke-width="1"/>
<rect x="42.5" y="584" width="4" height="2" fill="#777"/>
<circle cx="44.5" cy="587.8" r="1.1" fill="#555"/>
<path d="M61 584 l3 -1.5 l3 1.5 M64 582.5 v4 l-2.5 4 M64 586.5 l2.5 4 M66 588 l2 2 l3 -4" fill="none" stroke="#555" stroke-width="0.9"/>
<!-- view icons -->
<rect x="807" y="578" width="25" height="14" fill="#e2e2e2"/>
<rect x="815" y="581" width="8.6" height="8.6" fill="none" stroke="#444" stroke-width="0.9"/>
<path d="M815 583.9 h8.6 M815 586.7 h8.6 M817.9 581 v8.6 M820.7 581 v8.6" stroke="#444" stroke-width="0.7"/>
<rect x="840.5" y="581" width="8.6" height="8.6" fill="none" stroke="#444" stroke-width="0.9"/>
<path d="M843.4 581 v8.6 M846.2 581 v8.6" stroke="#444" stroke-width="0.7"/>
<rect x="867" y="581" width="8.6" height="8.6" fill="none" stroke="#444" stroke-width="0.9"/>
<path d="M869 581 v4 h4.6 v-4" fill="none" stroke="#444" stroke-width="0.8"/>
<!-- zoom slider -->
<rect x="888.5" y="585.3" width="3.5" height="0.9" fill="#666"/>
<rect x="896.5" y="585.4" width="64.5" height="0.8" fill="#888"/>
<rect x="921" y="582.5" width="2.6" height="6.5" fill="#444"/>
<path d="M965 585.8 h3.6 M966.8 584 v3.6" stroke="#666" stroke-width="0.9"/>
</svg>

</body></html>
